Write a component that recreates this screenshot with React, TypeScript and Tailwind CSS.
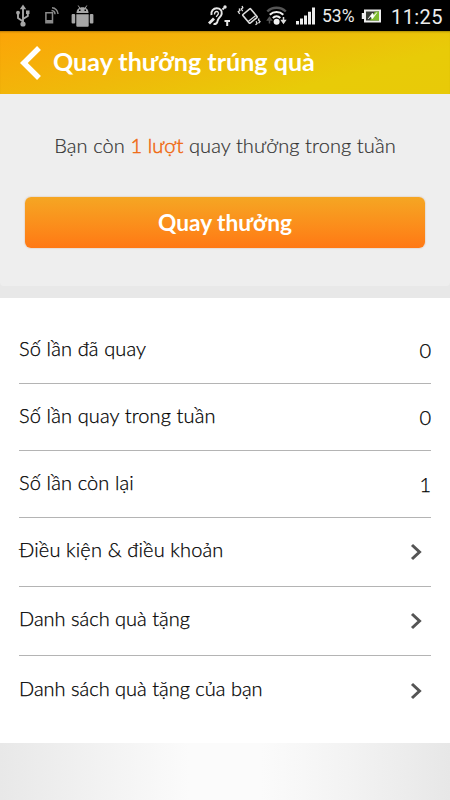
import React from 'react';

const UsbIcon = () => (
  <svg width="14" height="31" viewBox="16 0 14 31" fill="none" stroke="#a6a6a6" strokeWidth="1.900">
    <path d="M23 8v15M23 21.500l-5-3.500v-4.500M23 19l4.800-3v-4" />
    <path d="M23 4.500l3.200 4.700h-6.400z" fill="#a6a6a6" stroke="none" />
    <circle cx="23" cy="24" r="2.600" fill="#a6a6a6" stroke="none" />
    <circle cx="18" cy="12.700" r="1.900" fill="#a6a6a6" stroke="none" />
    <path d="M26 10.500h3.500v3.500h-3.500z" fill="#a6a6a6" stroke="none" />
  </svg>
);

const NfcIcon = () => (
  <svg width="16" height="31" viewBox="44 0 16 31" fill="none" stroke="#8a8a8a">
    <path d="M45.900 12.700h6.600v10h-6.600z" strokeWidth="1.500" />
    <path d="M46 21h6.500" strokeWidth="2" />
    <path d="M51.500 10.500a3.800 3.800 0 0 1 3.500 3.700M52 7.800a6.200 6.200 0 0 1 6 6.200" strokeWidth="1.500" />
  </svg>
);

const AndroidIcon = () => (
  <svg width="26" height="31" viewBox="70 0 26 31" fill="#a6a6a6">
    <path d="M76.500 13c0-3.500 2.300-5.700 6-5.700s6 2.200 6 5.700z" />
    <path d="M78.200 5.500l1.800 3M86.800 5.500l-1.800 3" stroke="#a6a6a6" strokeWidth="1" />
    <path d="M76.300 14.200h12.400v11.600q0 1-1 1H77.300q-1 0-1-1z" />
    <rect x="71.600" y="14" width="3.600" height="9.500" rx="1" />
    <rect x="89.800" y="14" width="3.600" height="9.500" rx="1" />
    <path d="M79 9.600h1.500v1.500H79zM84.500 9.600H86v1.500h-1.500z" fill="#000" />
  </svg>
);

const HearingIcon = () => (
  <svg width="24" height="31" viewBox="207 0 24 31" fill="none" stroke="#e6e6e6" strokeWidth="2">
    <path d="M211.500 15c-.8-4 2-6.700 5.200-6.700 3.600 0 5.600 2.500 5 5.500-.5 3-3.500 4-4 6.700-.3 2.500-2 4-4.200 3.400" />
    <path d="M214.500 14.500c0-2 .9-3 2.200-3s2 1.200 1.500 2.700l-2 2.600" strokeWidth="1.300" />
    <path d="M209 23.500l5-5" strokeWidth="2.800" />
    <path d="M222.500 9.500l1.500-1.500" strokeWidth="2" />
    <circle cx="225" cy="7" r="1.700" fill="#e6e6e6" stroke="none" />
    <path d="M224.500 20.900h5.500M227.200 20.500v5.500" strokeWidth="2" />
  </svg>
);

const VibrateIcon = () => (
  <svg width="24" height="31" viewBox="237 0 24 31" fill="none" stroke="#dedede" strokeWidth="1.600">
    <path d="M243 14.500l6.700-5.700q.6-.4 1 .1l6.300 7.600q.4.600-.1 1.100l-6.700 5.500q-.6.400-1-.1l-6.300-7.400q-.4-.6.100-1.100z" />
    <path d="M248.500 21.300l7-5.600" strokeWidth="1.200" />
    <path d="M239.700 14l-1.500-2.300 1.700-1.200-.7-2M242.700 11.200l-1.400-2.200 1.500-1.200-.7-1.800M255.500 24.800l1.600-1.300-1-2.200M258.500 23.300l1.500-1.700-1.500-1.500.5-1.600" strokeWidth="1.300" />
  </svg>
);

const WifiIcon = () => (
  <svg width="22" height="31" viewBox="266 0 22 31" fill="none" stroke="#f2f2f2" strokeWidth="2">
    <path d="M267.300 11.500c5-5 13.500-5 18.500 0" stroke="#555" strokeWidth="2.400" />
    <path d="M269.800 14.700c3.800-3.700 9.700-3.700 13.500 0M272.800 18c2.200-2.200 5.300-2.200 7.500 0" />
    <circle cx="276.600" cy="21.700" r="3" fill="#f2f2f2" stroke="none" />
    <path d="M269.500 23.500v-4M267.700 20l1.800-2.500 1.800 2.500z" stroke="#555" strokeWidth="1.500" />
    <path d="M283.500 17v4M281.800 20.500l1.700 2.500 1.700-2.500z" stroke="#ddd" strokeWidth="1.500" />
  </svg>
);

const SignalIcon = () => (
  <svg width="21" height="31" viewBox="295 0 21 31" fill="#ececec">
    <path d="M296 21h3v3.500h-3zM300 18.500h3v6h-3zM304 15.500h3v9h-3zM308 11.700h3v12.800h-3zM312 7.500h3v17h-3z" />
  </svg>
);

const BatteryIcon = () => (
  <svg width="21" height="31" viewBox="361 0 21 31">
    <path d="M364 9.500h17v13h-17v-3.500h-2.200v-6H364z" fill="#eee" />
    <path d="M366 11.500h13v9h-13z" fill="#383c35" />
    <path d="M375 11.500h4v9h-9z" fill="#7fbd2e" />
    <path d="M368 19l4.500-6 1.300 2.500 3.200-3-4.700 6.500-1.500-2.500z" fill="#fff" stroke="#fff" strokeWidth=".5" />
  </svg>
);

const StatusBar: React.FC = () => (
  <div className="flex h-[31px] items-center bg-black pl-4 pr-[7px] font-['Roboto',sans-serif] text-[#ececec]">
    <UsbIcon />
    <span className="ml-[14px]"><NfcIcon /></span>
    <span className="ml-[10px]"><AndroidIcon /></span>
    <div className="ml-auto flex items-center">
      <HearingIcon />
      <span className="ml-[6px]"><VibrateIcon /></span>
      <span className="ml-[5px]"><WifiIcon /></span>
      <span className="ml-[7px]"><SignalIcon /></span>
      <span className="ml-[6px] w-[33px] whitespace-nowrap pt-[2px] text-[17.500px] leading-none">53%</span>
      <span className="ml-[6px]"><BatteryIcon /></span>
      <span className="ml-[9px] w-[52px] whitespace-nowrap pt-[2px] text-[20px] leading-none tracking-[0.4px]">11:25</span>
    </div>
  </div>
);

const stats = [
  { label: 'Số lần đã quay', value: 0 },
  { label: 'Số lần quay trong tuần', value: 0 },
  { label: 'Số lần còn lại', value: 1 },
];

const links = [
  { label: 'Điều kiện & điều khoản', tracking: 'tracking-[0.140px]' },
  { label: 'Danh sách quà tặng', tracking: 'tracking-normal' },
  { label: 'Danh sách quà tặng của bạn', tracking: 'tracking-normal' },
];

const App: React.FC = () => {
  return (
    <div className="flex h-[800px] w-[450px] flex-col overflow-hidden bg-white font-['Lato',sans-serif]">
      <StatusBar />

      <header className="flex h-[63px] items-center bg-[linear-gradient(165deg,#fca408_0%,#efba0a_45%,#e8cb08_75%,#e8ca08_100%)] pl-5 text-white shadow-[inset_0_2px_2px_-1px_#0004]">
        <svg width="21" height="34" viewBox="0 0 21 34" fill="none" stroke="#fff" strokeWidth="5.500">
          <path d="M19 2L3.800 17 19 32" />
        </svg>
        <h1 className="ml-[12px] whitespace-nowrap pb-[3px] text-[25.100px] font-bold leading-[30px]">Quay thưởng trúng quà</h1>
      </header>

      <section className="h-[204px] bg-[#e8e8e8]">
        <div className="flex h-[192px] flex-col rounded-b-[4px] bg-[#eee] px-[25px]">
          <p className="mt-[36px] whitespace-nowrap text-center text-[20px] font-light leading-[30px] tracking-[0.1px] text-[#333] [-webkit-text-stroke:0.2px]">
            Bạn còn <span className="text-[#ee6a12] [-webkit-text-stroke:0.5px]">1 lượt</span> quay thưởng trong tuần
          </p>
          <button className="mt-[37px] h-[51px] rounded-[6px] bg-linear-to-b from-[#f5a623] to-[#ff7814] pt-[2px] text-[22.700px] font-bold text-white shadow-[0_0_1px_1px_#e6dcd4]">
            Quay thưởng
          </button>
        </div>
      </section>

      <main className="h-[445px] px-[19px] pt-[19px] text-[20px] font-light text-black [-webkit-text-stroke:0.25px]">
        {stats.map((stat) => (
          <div key={stat.label} className="flex h-[67px] items-center justify-between border-b border-[#b4b4b4]">
            <span className="pb-[4px] tracking-[0.120px]">{stat.label}</span>
            <span>{stat.value}</span>
          </div>
        ))}
        {links.map((link) => (
          <div key={link.label} className="flex h-[69px] items-center justify-between border-b border-[#b4b4b4] pr-[8px] last:border-0">
            <span className={`pb-[6px] ${link.tracking}`}>{link.label}</span>
            <svg width="13" height="18" viewBox="0 0 13 18" fill="none" stroke="#555" strokeWidth="3">
              <path d="M2 2l7.500 7L2 16" />
            </svg>
          </div>
        ))}
      </main>

      <footer className="flex-1 bg-[linear-gradient(90deg,#e8e8e8_0%,#f2f2f2_22%,#fbfbfb_42%,#fbfbfb_58%,#f3f3f3_77%,#e7e7e7_100%)]" />
    </div>
  );
};

export default App;
